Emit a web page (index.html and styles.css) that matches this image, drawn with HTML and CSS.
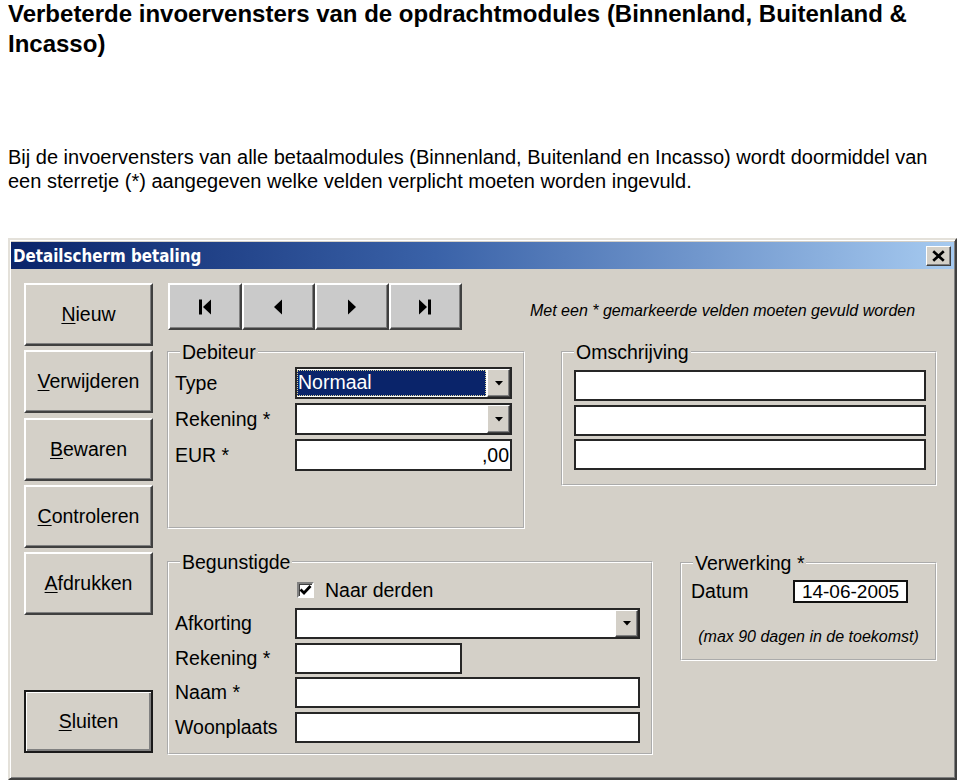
FILE: index.html
```html
<!DOCTYPE html>
<html lang="nl">
<head>
<meta charset="utf-8">
<title>Detailscherm betaling</title>
<link rel="stylesheet" href="styles.css">
</head>
<body>
<h1 class="doc-title">Verbeterde invoervensters van de opdrachtmodules (Binnenland, Buitenland &amp; Incasso)</h1>
<p class="doc-text">Bij de invoervensters van alle betaalmodules (Binnenland, Buitenland en Incasso) wordt doormiddel van een sterretje (*) aangegeven welke velden verplicht moeten worden ingevuld.</p>

<div class="window">
  <div class="titlebar">
    <span class="title">Detailscherm betaling</span>
    <span class="close"><svg width="24" height="18" viewBox="0 0 24 18"><path d="M6.5 4 L17.5 14 M17.5 4 L6.5 14" stroke="#000" stroke-width="2.8" fill="none"/></svg></span>
  </div>
  <div class="client">
    <div class="side">
      <div class="btn"><span><u>N</u>ieuw</span></div>
      <div class="btn"><span><u>V</u>erwijderen</span></div>
      <div class="btn"><span><u>B</u>ewaren</span></div>
      <div class="btn"><span><u>C</u>ontroleren</span></div>
      <div class="btn"><span><u>A</u>fdrukken</span></div>
      <div class="btn btn-default"><span><u>S</u>luiten</span></div>
    </div>
    <div class="main">
      <div class="navrow">
        <div class="navbtns">
          <div class="navbtn"><svg width="16" height="16" viewBox="0 0 16 16"><rect x="2" y="0.5" width="3" height="15" fill="#000"/><polygon points="14,0.5 6,8 14,15.5" fill="#000"/></svg></div>
          <div class="navbtn"><svg width="16" height="16" viewBox="0 0 16 16"><polygon points="12,0.5 4,8 12,15.5" fill="#000"/></svg></div>
          <div class="navbtn"><svg width="16" height="16" viewBox="0 0 16 16"><polygon points="4,0.5 12,8 4,15.5" fill="#000"/></svg></div>
          <div class="navbtn"><svg width="16" height="16" viewBox="0 0 16 16"><polygon points="2,0.5 10,8 2,15.5" fill="#000"/><rect x="11" y="0.5" width="3" height="15" fill="#000"/></svg></div>
        </div>
        <div class="note">Met een * gemarkeerde velden moeten gevuld worden</div>
      </div>

      <div class="groups groups-top">
        <fieldset class="group g-deb">
          <legend>Debiteur</legend>
          <div class="form form-deb">
            <span class="lbl">Type</span>
            <div class="field combo"><span class="val selected">Normaal</span><span class="drop"><svg width="8" height="5" viewBox="0 0 8 5"><polygon points="0,0 8,0 4,4.5" fill="#000"/></svg></span></div>
            <span class="lbl">Rekening *</span>
            <div class="field combo"><span class="val"></span><span class="drop"><svg width="8" height="5" viewBox="0 0 8 5"><polygon points="0,0 8,0 4,4.5" fill="#000"/></svg></span></div>
            <span class="lbl">EUR *</span>
            <div class="field amount">,00</div>
          </div>
        </fieldset>

        <fieldset class="group g-oms">
          <legend>Omschrijving</legend>
          <div class="form form-oms">
            <div class="field"></div>
            <div class="field"></div>
            <div class="field"></div>
          </div>
        </fieldset>
      </div>

      <div class="groups groups-bottom">
        <fieldset class="group g-beg">
          <legend>Begunstigde</legend>
          <div class="form form-beg">
            <div class="check-row">
              <span class="checkbox"><svg width="13" height="12" viewBox="0 0 13 12"><path d="M1.5 5.5 L5 9 L11.5 2" stroke="#000" stroke-width="2.8" fill="none"/></svg></span>
              <span>Naar derden</span>
            </div>
            <span class="lbl">Afkorting</span>
            <div class="field combo"><span class="val"></span><span class="drop"><svg width="8" height="5" viewBox="0 0 8 5"><polygon points="0,0 8,0 4,4.5" fill="#000"/></svg></span></div>
            <span class="lbl">Rekening *</span>
            <div class="field short"></div>
            <span class="lbl">Naam *</span>
            <div class="field"></div>
            <span class="lbl">Woonplaats</span>
            <div class="field"></div>
          </div>
        </fieldset>

        <fieldset class="group g-ver">
          <legend>Verwerking *</legend>
          <div class="ver-row">
            <span class="lbl ver-lbl">Datum</span>
            <div class="field date">14-06-2005</div>
          </div>
          <div class="hint">(max 90 dagen in de toekomst)</div>
        </fieldset>
      </div>
    </div>
  </div>
</div>
</body>
</html>
```

FILE: styles.css
```css
* { box-sizing: border-box; }

html, body { margin: 0; background: #fff; }

body {
  padding: 0 8px;
  font-family: "Liberation Sans", Arial, Helvetica, sans-serif;
  color: #000;
}

.doc-title {
  margin: -1px 0 0;
  font-size: 24px;
  line-height: 30px;
  font-weight: bold;
}

.doc-text {
  margin: 86px 0 0;
  font-size: 20px;
  line-height: 24px;
}

/* ---------- window ---------- */
.window {
  margin-top: 45px;
  width: 949px;
  height: 542px;
  display: flex;
  flex-direction: column;
  padding: 2px 1px 1px 1px;
  background: #d4d0c8;
  border: 2px solid;
  border-color: #e4e1da #404040 #404040 #e4e1da;
  box-shadow: inset 1px 1px 0 #fff, inset -1px -1px 0 #808080;
}

.titlebar {
  flex: none;
  height: 27px;
  display: flex;
  align-items: center;
  background: linear-gradient(90deg, #0a246a 0%, #3a62a8 45%, #a6caf0 100%);
}

.title {
  padding-left: 2px;
  color: #fff;
  font-family: "DejaVu Sans Condensed", "DejaVu Sans", sans-serif;
  font-weight: bold;
  font-size: 16.8px;
}

.close {
  margin: 0 3px 0 auto;
  width: 25px;
  height: 20px;
  display: flex;
  align-items: center;
  justify-content: center;
  background: #d4d0c8;
  border: 1px solid;
  border-color: #fff #404040 #404040 #fff;
  box-shadow: inset -1px -1px 0 #808080;
}

.client {
  flex: 1;
  display: flex;
  padding: 14px 0 0 13px;
  font-size: 19.5px;
}

/* ---------- left buttons ---------- */
.side {
  flex: none;
  width: 129px;
  display: flex;
  flex-direction: column;
}

.btn {
  flex: none;
  height: 63px;
  margin-bottom: 4.25px;
  display: flex;
  align-items: center;
  justify-content: center;
  background: #d4d0c8;
  border: 2px solid;
  border-color: #fff #404040 #404040 #fff;
  box-shadow: inset -1px -1px 0 #808080;
}

.btn u { text-decoration-thickness: 1px; text-underline-offset: 2px; }

.btn-default {
  margin-top: 70.75px;
  border-color: #1a1a1a;
  box-shadow: inset 1px 1px 0 #fff, inset -2px -2px 0 #808080;
}

/* ---------- main area ---------- */
.main {
  flex: none;
  margin-left: 14px;
  display: flex;
  flex-direction: column;
}

.navrow {
  display: flex;
  align-items: flex-start;
  height: 47px;
}

.navbtns {
  display: flex;
  margin-left: 1px;
}

.navbtn {
  width: 73.5px;
  height: 47px;
  display: flex;
  align-items: center;
  justify-content: center;
  background: #cacaca;
  border: 2px solid;
  border-color: #fff #404040 #404040 #fff;
  box-shadow: inset -1px -1px 0 #808080;
}

.note {
  margin: 18px 0 0 68px;
  font-style: italic;
  font-size: 16px;
  line-height: 20px;
  white-space: nowrap;
}

.groups {
  display: flex;
  align-items: flex-start;
}

.groups-top { margin-top: 11px; }
.groups-bottom { margin-top: 22px; }

.group {
  margin: 0;
  padding: 0;
  min-width: 0;
  border: 2px groove #fff;
}

.group legend {
  margin-left: 11px;
  padding: 0 2px;
  font-size: 19.5px;
  line-height: 22px;
}

.g-deb { width: 358px; height: 188px; }
.g-oms { width: 376px; height: 145px; margin-left: 36px; }
.g-beg { width: 486px; height: 204px; }
.g-ver { width: 257px; height: 109px; margin: 1px 0 0 27px; }

.form {
  display: grid;
  align-items: center;
}

.form-deb {
  grid-template-columns: 120px 217px;
  grid-auto-rows: 32px;
  row-gap: 4px;
  padding: 4px 0 0 6px;
}

.form-oms {
  grid-template-columns: 352px;
  grid-auto-rows: 31px;
  row-gap: 3.5px;
  padding: 7px 0 0 11px;
}

.form-beg {
  grid-template-columns: 120px 345px;
  grid-template-rows: 22.5px repeat(4, 31px);
  row-gap: 3.5px;
  padding: 9px 0 0 6px;
}

.lbl { white-space: nowrap; }

.check-row {
  grid-column: 2;
  align-self: start;
  height: 16px;
  display: flex;
  align-items: center;
  gap: 11px;
  padding-left: 2px;
}

.checkbox {
  flex: none;
  width: 17px;
  height: 16px;
  display: flex;
  align-items: center;
  justify-content: center;
  background: #fff;
  border: 2px solid;
  border-color: #808080 #fff #fff #808080;
  box-shadow: inset 1px 1px 0 #404040;
}

/* ---------- fields ---------- */
.field {
  height: 100%;
  background: #fff;
  border: 2px solid #262626;
}

.field.short { width: 167px; }

.combo {
  display: flex;
}

.combo .val {
  flex: 1;
  display: flex;
  align-items: center;
  padding-left: 1px;
  line-height: 1;
}

.combo .val.selected {
  margin: 1px 1px 1px 0;
  background: #0a246a;
  color: #fff;
  outline: 1px dotted #d8d49a;
  outline-offset: -1px;
}

.drop {
  flex: none;
  width: 23px;
  height: 100%;
  display: flex;
  align-items: center;
  justify-content: center;
  background: #d4d0c8;
  border: 1px solid;
  border-color: #fff #404040 #404040 #fff;
  box-shadow: inset -1px -1px 0 #808080;
}

.amount {
  display: flex;
  align-items: center;
  justify-content: flex-end;
  padding-right: 1px;
}

.ver-row {
  display: flex;
  align-items: center;
  padding: 6px 0 0 9px;
}

.ver-lbl { width: 102px; }

.date {
  width: 115px;
  height: 23px;
  display: flex;
  align-items: center;
  justify-content: center;
  font-size: 19px;
  border-width: 2px;
  border-color: #111;
}

.hint {
  margin-top: 24px;
  text-align: center;
  font-style: italic;
  font-size: 16px;
  line-height: 20px;
  white-space: nowrap;
}
```
